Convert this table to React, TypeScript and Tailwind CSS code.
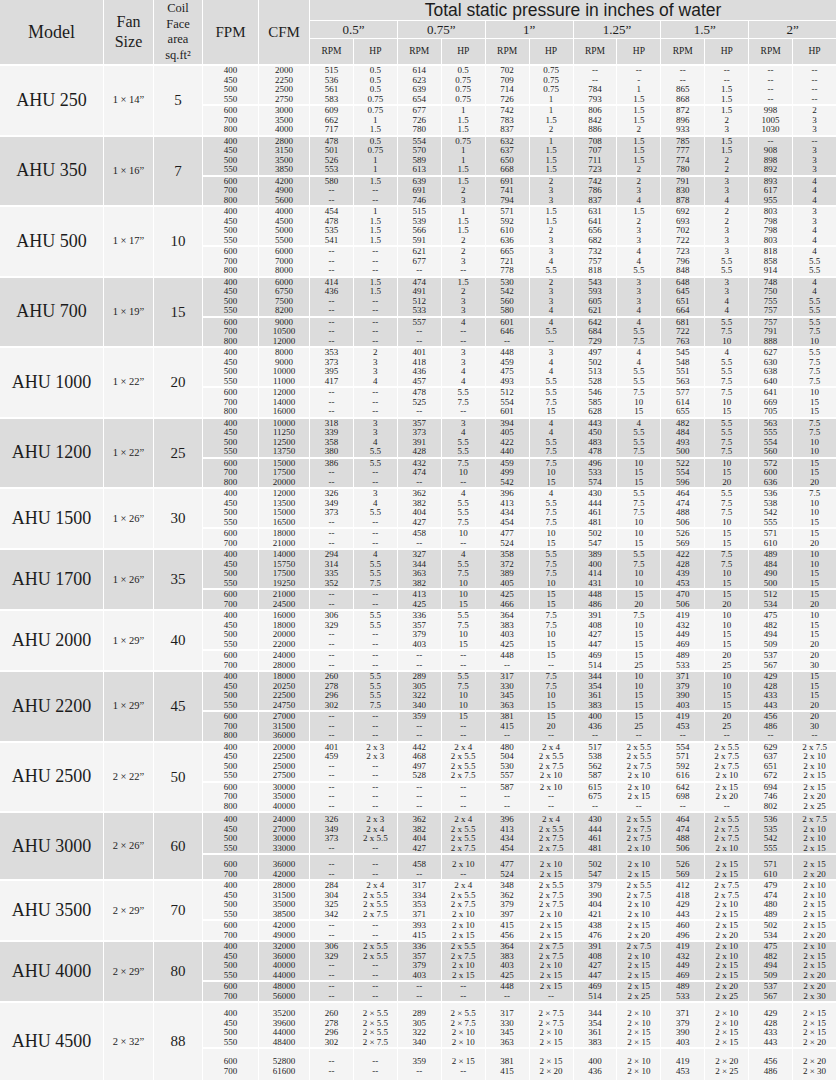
const PRESSURES = ["0.5”", "0.75”", "1”", "1.25”", "1.5”", "2”"];

type Group = {
  model: string;
  fan: string;
  area: string;
  dark: boolean;
  gapMid?: number;
  padTop?: number;
  padBottom?: number;
  blocks: string[][];
};

// each row: FPM CFM then RPM/HP pairs for every pressure; "2x3" means two motors
const GROUPS: Group[] = [
  {
    model: "AHU 250", fan: "1 × 14”", area: "5", dark: false,
    blocks: [
      ["400 2000 515 0.5 614 0.5 702 0.75 -- -- -- -- -- --",
        "450 2250 536 0.5 623 0.75 709 0.75 -- - -- -- -- --",
        "500 2500 561 0.5 639 0.75 714 0.75 784 1 865 1.5 -- --",
        "550 2750 583 0.75 654 0.75 726 1 793 1.5 868 1.5 -- --"],
      ["600 3000 609 0.75 677 1 742 1 806 1.5 872 1.5 998 2",
        "700 3500 662 1 726 1.5 783 1.5 842 1.5 896 2 1005 3",
        "800 4000 717 1.5 780 1.5 837 2 886 2 933 3 1030 3"],
    ],
  },
  {
    model: "AHU 350", fan: "1 × 16”", area: "7", dark: true,
    blocks: [
      ["400 2800 478 0.5 554 0.75 632 1 708 1.5 785 1.5 -- --",
        "450 3150 501 0.75 570 1 637 1.5 707 1.5 777 1.5 908 3",
        "500 3500 526 1 589 1 650 1.5 711 1.5 774 2 898 3",
        "550 3850 553 1 613 1.5 668 1.5 723 2 780 2 892 3"],
      ["600 4200 580 1.5 639 1.5 691 2 742 2 791 3 893 4",
        "700 4900 -- -- 691 2 741 3 786 3 830 3 617 4",
        "800 5600 -- -- 746 3 794 3 837 4 878 4 955 4"],
    ],
  },
  {
    model: "AHU 500", fan: "1 × 17”", area: "10", dark: false,
    blocks: [
      ["400 4000 454 1 515 1 571 1.5 631 1.5 692 2 803 3",
        "450 4500 478 1.5 539 1.5 592 1.5 641 2 693 2 798 3",
        "500 5000 535 1.5 566 1.5 610 2 656 3 702 3 798 4",
        "550 5500 541 1.5 591 2 636 3 682 3 722 3 803 4"],
      ["600 6000 -- -- 621 2 665 3 732 4 723 3 818 4",
        "700 7000 -- -- 677 3 721 4 757 4 796 5.5 858 5.5",
        "800 8000 -- -- -- -- 778 5.5 818 5.5 848 5.5 914 5.5"],
    ],
  },
  {
    model: "AHU 700", fan: "1 × 19”", area: "15", dark: true,
    blocks: [
      ["400 6000 414 1.5 474 1.5 530 2 543 3 648 3 748 4",
        "450 6750 436 1.5 491 2 542 3 593 3 645 3 750 4",
        "500 7500 -- -- 512 3 560 3 605 3 651 4 755 5.5",
        "550 8200 -- -- 533 3 580 4 621 4 664 4 757 5.5"],
      ["600 9000 -- -- 557 4 601 4 642 4 681 5.5 757 5.5",
        "700 10500 -- -- -- -- 646 5.5 684 5.5 722 7.5 791 7.5",
        "800 12000 -- -- -- -- -- -- 729 7.5 763 10 888 10"],
    ],
  },
  {
    model: "AHU 1000", fan: "1 × 22”", area: "20", dark: false,
    blocks: [
      ["400 8000 353 2 401 3 448 3 497 4 545 4 627 5.5",
        "450 9000 373 3 418 3 459 4 502 4 548 5.5 630 7.5",
        "500 10000 395 3 436 4 475 4 513 5.5 551 5.5 638 7.5",
        "550 11000 417 4 457 4 493 5.5 528 5.5 563 7.5 640 7.5"],
      ["600 12000 -- -- 478 5.5 512 5.5 546 7.5 577 7.5 641 10",
        "700 14000 -- -- 525 7.5 554 7.5 585 10 614 10 669 15",
        "800 16000 -- -- -- -- 601 15 628 15 655 15 705 15"],
    ],
  },
  {
    model: "AHU 1200", fan: "1 × 22”", area: "25", dark: true,
    blocks: [
      ["400 10000 318 3 357 3 394 4 443 4 482 5.5 563 7.5",
        "450 11250 339 3 373 4 405 4 450 5.5 484 5.5 555 7.5",
        "500 12500 358 4 391 5.5 422 5.5 483 5.5 493 7.5 554 10",
        "550 13750 380 5.5 428 5.5 440 7.5 478 7.5 500 7.5 560 10"],
      ["600 15000 386 5.5 432 7.5 459 7.5 496 10 522 10 572 15",
        "700 17500 -- -- 474 10 499 10 533 15 554 15 600 15",
        "800 20000 -- -- -- -- 542 15 574 15 596 20 636 20"],
    ],
  },
  {
    model: "AHU 1500", fan: "1 × 26”", area: "30", dark: false,
    blocks: [
      ["400 12000 326 3 362 4 396 4 430 5.5 464 5.5 536 7.5",
        "450 13500 349 4 382 5.5 413 5.5 444 7.5 474 7.5 538 10",
        "500 15000 373 5.5 404 5.5 434 7.5 461 7.5 488 7.5 542 10",
        "550 16500 -- -- 427 7.5 454 7.5 481 10 506 10 555 15"],
      ["600 18000 -- -- 458 10 477 10 502 10 526 15 571 15",
        "700 21000 -- -- -- -- 524 15 547 15 569 15 610 20"],
    ],
  },
  {
    model: "AHU 1700", fan: "1 × 26”", area: "35", dark: true,
    blocks: [
      ["400 14000 294 4 327 4 358 5.5 389 5.5 422 7.5 489 10",
        "450 15750 314 5.5 344 5.5 372 7.5 400 7.5 428 7.5 484 10",
        "500 17500 335 5.5 363 7.5 389 7.5 414 10 439 10 490 15",
        "550 19250 352 7.5 382 10 405 10 431 10 453 15 500 15"],
      ["600 21000 -- -- 413 10 425 15 448 15 470 15 512 15",
        "700 24500 -- -- 425 15 466 15 486 20 506 20 534 20"],
    ],
  },
  {
    model: "AHU 2000", fan: "1 × 29”", area: "40", dark: false,
    blocks: [
      ["400 16000 306 5.5 336 5.5 364 7.5 391 7.5 419 10 475 10",
        "450 18000 329 5.5 357 7.5 383 7.5 408 10 432 10 482 15",
        "500 20000 -- -- 379 10 403 10 427 15 449 15 494 15",
        "550 22000 -- -- 403 15 425 15 447 15 469 15 509 20"],
      ["600 24000 -- -- -- -- 448 15 469 15 489 20 537 20",
        "700 28000 -- -- -- -- -- -- 514 25 533 25 567 30"],
    ],
  },
  {
    model: "AHU 2200", fan: "1 × 29”", area: "45", dark: true,
    blocks: [
      ["400 18000 260 5.5 289 5.5 317 7.5 344 10 371 10 429 15",
        "450 20250 278 5.5 305 7.5 330 7.5 354 10 379 10 428 15",
        "500 22500 296 5.5 322 10 345 10 361 15 390 15 433 15",
        "550 24750 302 7.5 340 10 363 15 383 15 403 15 443 20"],
      ["600 27000 -- -- 359 15 381 15 400 15 419 20 456 20",
        "700 31500 -- -- -- -- 415 20 436 25 453 25 486 30",
        "800 36000 -- -- -- -- -- -- -- -- -- -- -- --"],
    ],
  },
  {
    model: "AHU 2500", fan: "2 × 22”", area: "50", dark: false,
    blocks: [
      ["400 20000 401 2x3 442 2x4 480 2x4 517 2x5.5 554 2x5.5 629 2x7.5",
        "450 22500 459 2x3 468 2x5.5 504 2x5.5 538 2x5.5 571 2x7.5 637 2x10",
        "500 25000 -- -- 497 2x5.5 530 2x7.5 562 2x7.5 592 2x7.5 651 2x10",
        "550 27500 -- -- 528 2x7.5 557 2x10 587 2x10 616 2x10 672 2x15"],
      ["600 30000 -- -- -- -- 587 2x10 615 2x10 642 2x15 694 2x15",
        "700 35000 -- -- -- -- -- -- 675 2x15 698 2x20 746 2x20",
        "800 40000 -- -- -- -- -- -- -- -- -- -- 802 2x25"],
    ],
  },
  {
    model: "AHU 3000", fan: "2 × 26”", area: "60", dark: true, gapMid: 5, padTop: 2,
    blocks: [
      ["400 24000 326 2x3 362 2x4 396 2x4 430 2x5.5 464 2x5.5 536 2x7.5",
        "450 27000 349 2x4 382 2x5.5 413 2x5.5 444 2x7.5 474 2x7.5 535 2x10",
        "500 30000 373 2x5.5 404 2x5.5 434 2x7.5 461 2x7.5 488 2x7.5 542 2x10",
        "550 33000 -- -- 427 2x7.5 454 2x7.5 481 2x10 506 2x10 555 2x15"],
      ["600 36000 -- -- 458 2x10 477 2x10 502 2x10 526 2x15 571 2x15",
        "700 42000 -- -- -- -- 524 2x15 547 2x15 569 2x15 610 2x20"],
    ],
  },
  {
    model: "AHU 3500", fan: "2 × 29”", area: "70", dark: false,
    blocks: [
      ["400 28000 284 2x4 317 2x4 348 2x5.5 379 2x5.5 412 2x7.5 479 2x10",
        "450 31500 304 2x5.5 334 2x5.5 362 2x7.5 390 2x7.5 418 2x7.5 474 2x10",
        "500 35000 325 2x5.5 353 2x7.5 379 2x7.5 404 2x10 429 2x10 480 2x15",
        "550 38500 342 2x7.5 371 2x10 397 2x10 421 2x10 443 2x15 489 2x15"],
      ["600 42000 -- -- 393 2x10 415 2x15 438 2x15 460 2x15 502 2x15",
        "700 49000 -- -- 415 2x15 456 2x15 476 2x20 496 2x20 534 2x20"],
    ],
  },
  {
    model: "AHU 4000", fan: "2 × 29”", area: "80", dark: true,
    blocks: [
      ["400 32000 306 2x5.5 336 2x5.5 364 2x7.5 391 2x7.5 419 2x10 475 2x10",
        "450 36000 329 2x5.5 357 2x7.5 383 2x7.5 408 2x10 432 2x10 482 2x15",
        "500 40000 -- -- 379 2x10 403 2x10 427 2x15 449 2x15 494 2x15",
        "550 44000 -- -- 403 2x15 425 2x15 447 2x15 469 2x15 509 2x20"],
      ["600 48000 -- -- -- -- 448 2x15 469 2x15 489 2x20 537 2x20",
        "700 56000 -- -- -- -- -- -- 514 2x25 533 2x25 567 2x30"],
    ],
  },
  {
    model: "AHU 4500", fan: "2 × 32”", area: "88", dark: false, gapMid: 8, padTop: 6, padBottom: 4,
    blocks: [
      ["400 35200 260 2x5.5 289 2x5.5 317 2x7.5 344 2x10 371 2x10 429 2x15",
        "450 39600 278 2x5.5 305 2x7.5 330 2x7.5 354 2x10 379 2x10 428 2x15",
        "500 44000 296 2x5.5 322 2x10 345 2x10 361 2x15 390 2x15 433 2x15",
        "550 48400 302 2x7.5 340 2x10 363 2x15 383 2x15 403 2x15 443 2x20"],
      ["600 52800 -- -- 359 2x15 381 2x15 400 2x10 419 2x20 456 2x20",
        "700 61600 -- -- -- -- 415 2x20 436 2x10 453 2x25 486 2x30"],
    ],
  },
];

function cellText(t: string, model: string) {
  if (!t.includes("x")) return t;
  return t.replace("x", model === "AHU 4500" ? " × " : " x ");
}

function Spacer({ bg, h }: { bg: string; h: number }) {
  return (
    <div className="grid grid-cols-[55px_50px_repeat(12,1fr)] gap-x-px" style={{ height: h }}>
      {Array.from({ length: 14 }).map((_, i) => <div key={i} className={bg} />)}
    </div>
  );
}

function GroupRows({ g }: { g: Group }) {
  const bg = g.dark ? "bg-[#dcdcdc]" : "bg-[#f4f4f4]";
  return (
    <div className="grid grid-cols-[103px_49px_48px_1fr] gap-x-px">
      <div className={`${bg} flex items-center justify-center text-[18px]`}>{g.model}</div>
      <div className={`${bg} flex items-center justify-center text-[10.5px]`}>{g.fan}</div>
      <div className={`${bg} flex items-center justify-center text-[15px]`}>{g.area}</div>
      <div className="flex flex-col gap-y-[2px]">
        {g.blocks.map((block, bi) => (
          <div key={bi} className="flex flex-col">
            {bi === 0 && g.padTop ? <Spacer bg={bg} h={g.padTop} /> : null}
            {bi === 1 && g.gapMid ? <Spacer bg={bg} h={g.gapMid} /> : null}
            {block.map((row, ri) => (
              <div key={ri} className="grid h-[9.5px] grid-cols-[55px_50px_repeat(12,1fr)] gap-x-px">
                {row.split(" ").map((t, ci) => (
                  <div key={ci} className={`${bg} text-center text-[9px] leading-[9.5px] whitespace-nowrap`}>
                    {cellText(t, g.model)}
                  </div>
                ))}
              </div>
            ))}
            {bi === g.blocks.length - 1 && g.padBottom ? <Spacer bg={bg} h={g.padBottom} /> : null}
          </div>
        ))}
      </div>
    </div>
  );
}

export default function App() {
  return (
    <div className="w-[836px] bg-white font-['Liberation_Serif',serif] text-[#1c1c1c]">
      {/* Header */}
      <div className="grid grid-cols-[103px_49px_48px_55px_50px_repeat(12,1fr)] grid-rows-[20px_17px_25px] gap-px">
        <div className="row-span-3 flex items-center justify-center bg-[#dcdcdc] text-[18px]">Model</div>
        <div className="row-span-3 flex flex-col items-center justify-center bg-[#dcdcdc] text-[16px] leading-[20px]">
          <span>Fan</span>
          <span>Size</span>
        </div>
        <div className="row-span-3 flex flex-col items-center justify-center bg-[#dcdcdc] text-[12.5px] leading-[15.5px]">
          <span>Coil</span>
          <span>Face</span>
          <span>area</span>
          <span>sq.ft²</span>
        </div>
        <div className="row-span-3 flex items-center justify-center bg-[#dcdcdc] text-[15px]">FPM</div>
        <div className="row-span-3 flex items-center justify-center bg-[#dcdcdc] text-[15px]">CFM</div>
        <div className="col-span-12 flex items-center justify-center bg-[#dcdcdc] font-['Liberation_Sans',sans-serif] text-[17.5px]">
          Total static pressure in inches of water
        </div>
        {PRESSURES.map((p) => (
          <div key={p} className="col-span-2 flex items-center justify-center bg-[#dcdcdc] text-[13px]">
            {p}
          </div>
        ))}
        {PRESSURES.flatMap((p) => [
          <div key={p + "r"} className="flex items-center justify-center bg-[#dcdcdc] text-[9.5px]">RPM</div>,
          <div key={p + "h"} className="flex items-center justify-center bg-[#dcdcdc] text-[9.5px]">HP</div>,
        ])}
      </div>

      {/* Body */}
      <div className="mt-[2px] flex flex-col gap-y-[2px]">
        {GROUPS.map((g) => (
          <GroupRows key={g.model} g={g} />
        ))}
      </div>
    </div>
  );
}
